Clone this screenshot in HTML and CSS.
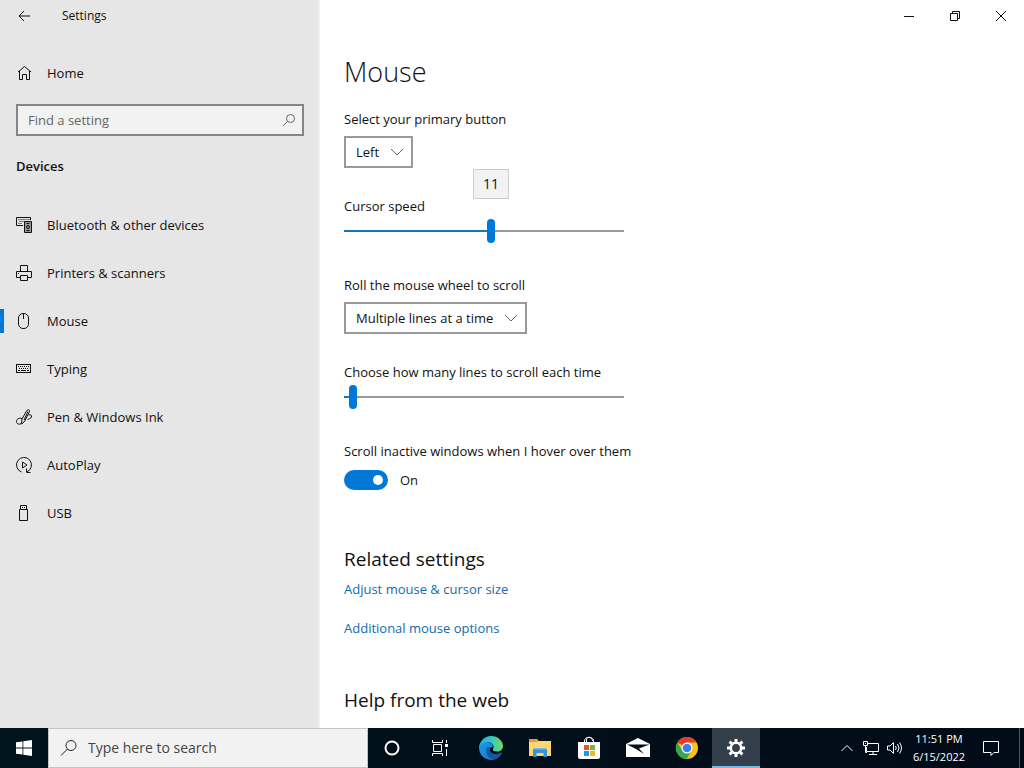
FILE: index.html
```html
<!DOCTYPE html>
<html lang="en">
<head>
    <meta charset="UTF-8">
    <meta name="viewport" content="width=device-width, initial-scale=1.0">
    <title>Settings</title>
    <link rel="stylesheet" href="styles.css">
</head>
<body>
    <div class="window">
        <!-- Sidebar -->
        <aside class="sidebar">
            <div class="title-bar">
                <button class="back-btn" aria-label="Back">
                    <svg width="12" height="12" viewBox="0 0 12 12"><path d="M12 6H1M6 1L1 6l5 5"/></svg>
                </button>
                <span>Settings</span>
            </div>

            <a class="nav-item home" href="#">
                <svg width="16" height="16" viewBox="0 0 16 16"><path d="M2 7L8.500 1.500L15 7M3.500 6v8.500h3v-5h4v5h3V6"/></svg>
                Home
            </a>

            <div class="search-box">
                <input type="text" placeholder="Find a setting" aria-label="Find a setting">
                <svg width="14" height="14" viewBox="0 0 14 14"><circle cx="8.500" cy="5.500" r="4"/><path d="M5.500 8.500L1 13"/></svg>
            </div>

            <h2 class="sidebar-title">Devices</h2>

            <nav class="nav">
                <a class="nav-item" href="#">
                    <svg width="16" height="16" viewBox="0 0 16 16"><path d="M7 8.500H.5v-8h14V3"/><path d="M2.500 2.500h11M3.500 4.500h5M2.500 6.500h4" stroke-dasharray="1 1"/><path class="dark-fill" d="M8.500 4.500h7v11h-7z"/><path d="M10.500 6.500h3M10.500 13.500h3"/><circle cx="12" cy="10" r="1.500"/></svg>
                    Bluetooth &amp; other devices
                </a>
                <a class="nav-item" href="#">
                    <svg width="16" height="16" viewBox="0 0 16 16"><path d="M4.500 6V.5h7V6M4 12.500H.5v-6h15v6H12M4.500 10.500h7v5h-7zM2 8.500h1"/></svg>
                    Printers &amp; scanners
                </a>
                <a class="nav-item active" href="#">
                    <svg width="16" height="16" viewBox="0 0 16 16"><rect x="2.500" y=".5" width="10" height="15" rx="4.500"/><path d="M7.500 1v5"/></svg>
                    Mouse
                </a>
                <a class="nav-item" href="#">
                    <svg width="16" height="16" viewBox="0 0 16 16"><rect x=".5" y="3.500" width="14" height="8"/><path d="M2 5.500h11M3 7.500h10" stroke-dasharray="1 1"/><path d="M2 9.500h2M5 9.500h5M11 9.500h2"/></svg>
                    Typing
                </a>
                <a class="nav-item" href="#">
                    <svg width="16" height="16" viewBox="0 0 16 16"><path d="M6 10L10.500 2C11.500.2 14 .6 13.500 2.500L8.500 12.500L5.500 15L6 10zM8 11L12 2.500M6 9.500C3 8.500.5 10 .5 12.500c0 3 4 3.500 5 1.500M12.500 6c2-1 3.500.5 3 2s-3 2-4 2.500"/></svg>
                    Pen &amp; Windows Ink
                </a>
                <a class="nav-item" href="#">
                    <svg width="16" height="16" viewBox="0 0 16 16"><path d="M5.500 15A7.500 7.500 0 1 1 11 14.800M14.500 15.500h-4v-4M6.500 5l4.500 3-4.500 3z"/></svg>
                    AutoPlay
                </a>
                <a class="nav-item" href="#">
                    <svg width="16" height="16" viewBox="0 0 16 16"><path d="M4.500 4V.5h6V4M3.500 4.500h8v11h-8zM6 2.500h1M8 2.500h1"/></svg>
                    USB
                </a>
            </nav>
        </aside>

        <!-- Main content -->
        <main class="content">
            <div class="window-controls">
                <button aria-label="Minimize"><svg width="12" height="12" viewBox="0 0 12 12"><path d="M1 6.500h10"/></svg></button>
                <button aria-label="Restore"><svg width="12" height="12" viewBox="0 0 12 12"><path d="M1.500 3.500h7v7h-7zM3.500 3V1.500h7v7H9"/></svg></button>
                <button aria-label="Close"><svg width="12" height="12" viewBox="0 0 12 12"><path d="M1 1l10 10M11 1L1 11"/></svg></button>
            </div>

            <h1>Mouse</h1>

            <div class="field">
                <label for="primary-button">Select your primary button</label>
                <div class="select-box">
                    <select id="primary-button">
                        <option>Left</option>
                        <option>Right</option>
                    </select>
                    <svg width="12" height="8" viewBox="0 0 12 8"><path d="M0 1l6 6 6-6"/></svg>
                </div>
            </div>

            <div class="field slider-field">
                <label for="cursor-speed">Cursor speed</label>
                <div class="slider" style="--fill: 52.5%">
                    <input type="range" id="cursor-speed" min="1" max="20" value="11">
                    <output class="tooltip" for="cursor-speed">11</output>
                </div>
            </div>

            <div class="field">
                <label for="wheel-scroll">Roll the mouse wheel to scroll</label>
                <div class="select-box">
                    <select id="wheel-scroll">
                        <option>Multiple lines at a time</option>
                        <option>One screen at a time</option>
                    </select>
                    <svg width="12" height="8" viewBox="0 0 12 8"><path d="M0 1l6 6 6-6"/></svg>
                </div>
            </div>

            <div class="field slider-field">
                <label for="scroll-lines">Choose how many lines to scroll each time</label>
                <div class="slider" style="--fill: 3%">
                    <input type="range" id="scroll-lines" min="1" max="100" value="3">
                </div>
            </div>

            <div class="field toggle-field">
                <label for="scroll-inactive">Scroll inactive windows when I hover over them</label>
                <div class="toggle-row">
                    <input type="checkbox" role="switch" class="toggle" id="scroll-inactive" checked>
                    <span>On</span>
                </div>
            </div>

            <section class="links">
                <h2>Related settings</h2>
                <a href="#">Adjust mouse &amp; cursor size</a>
                <a href="#">Additional mouse options</a>
            </section>

            <section class="links">
                <h2>Help from the web</h2>
            </section>
        </main>
    </div>

    <!-- Taskbar -->
    <footer class="taskbar">
        <button class="task-btn" aria-label="Start">
            <svg width="16" height="16" viewBox="0 0 16 16"><path fill="#fff" d="M0 2.300L6.500 1.400V7.600H0zM7.300 1.300L16 0v7.600H7.300zM0 8.400h6.500v6.200L0 13.700zM7.300 8.400H16V16l-8.700-1.300z"/></svg>
        </button>
        <div class="task-search">
            <svg width="18" height="18" viewBox="0 0 18 18"><circle cx="11" cy="6.500" r="5"/><path d="M7.500 10L1 16.500"/></svg>
            <input type="text" placeholder="Type here to search" aria-label="Type here to search">
        </div>
        <button class="task-btn" aria-label="Cortana">
            <svg width="16" height="16" viewBox="0 0 16 16"><circle cx="8" cy="8" r="6.500" fill="none" stroke="#fff" stroke-width="2"/></svg>
        </button>
        <button class="task-btn" aria-label="Task View">
            <svg width="16" height="16" viewBox="0 0 16 16"><path fill="none" stroke="#fff" d="M.5 0v2.500h10V0M.5 16v-2.500h10V16M1.500 4.500h8v7h-8zM14.500 0v3M14.500 9v7"/><path fill="#fff" d="M13 4h3v3h-3z"/></svg>
        </button>
        <div class="pinned">
            <button class="task-btn" aria-label="Microsoft Edge">
                <svg width="24" height="24" viewBox="0 0 24 24">
                    <defs>
                        <linearGradient id="edge-top" x1="0" y1="0" x2="1" y2="0"><stop offset="0" stop-color="#2aa9e0"/><stop offset=".5" stop-color="#36c6c3"/><stop offset="1" stop-color="#73dc58"/></linearGradient>
                        <linearGradient id="edge-low" x1="0" y1="0" x2="1" y2="1"><stop offset="0" stop-color="#1b9be6"/><stop offset="1" stop-color="#1672cc"/></linearGradient>
                    </defs>
                    <path fill="url(#edge-low)" d="M0 12C0 7 4 5 8 6c4 .5 6 3 6 5-4-1-5 6 1 7 3 .6 5.500-.4 7-1.200.6-.3 1 .1.600.8A12 12 0 0 1 0 12z"/>
                    <path fill="#1656a0" d="M8.500 11c-3 4-.5 11 5.500 12.500 3.500-.5 7-2.700 8.600-5.900.4-.7 0-1.100-.6-.8-6 3.500-13 .2-11.200-5.400z"/>
                    <path fill="url(#edge-top)" d="M0 12C.5 5 5.500 0 12 0c7 0 12 5 12 10 0 3.500-2.500 5.500-6 5.500-3 0-4.500-1-4-2 2-3.500-1-7.500-6-7.500-4 0-7 2.500-8 6z"/>
                </svg>
            </button>
            <button class="task-btn" aria-label="File Explorer">
                <svg width="22" height="18" viewBox="0 0 22 18"><path fill="#e7a12b" d="M0 0h8l2 2h12v4H0z"/><path fill="#fcd66f" d="M0 3h8l2-1h12v15H0z"/><path fill="#3c91d4" d="M4 10.500l1.500-1.500h11l1.500 1.500V18h-3.500v-4h-7v4H4z"/><path fill="#74b9e8" d="M5.500 9h11l1 1.500h-13z"/></svg>
            </button>
            <button class="task-btn" aria-label="Microsoft Store">
                <svg width="24" height="24" viewBox="0 0 24 24"><path fill="none" stroke="#fff" d="M7.500 7V5c0-5 9-5 9 0v2M9.500 7V4c0-4 6-3 6 1"/><path fill="#fff" d="M1 6h22v15q0 2-2 2H3q-2 0-2-2z"/><path fill="#e75431" d="M7 9h5v5H7z"/><path fill="#77b62d" d="M13 9h5v5h-5z"/><path fill="#1c9ee6" d="M7 15h5v5H7z"/><path fill="#f5b823" d="M13 15h5v5h-5z"/></svg>
            </button>
            <button class="task-btn" aria-label="Mail">
                <svg width="24" height="20" viewBox="0 0 24 20"><path fill="#fff" d="M0 6l12-6 12 6v13H0z"/><path fill="#03111b" d="M1 6.500h22.500L13 10.500l5 5.500-8-5z"/></svg>
            </button>
            <button class="task-btn" aria-label="Google Chrome">
                <svg width="24" height="24" viewBox="0 0 24 24"><circle cx="12" cy="12" r="11" fill="#fbc116"/><path fill="#e33b2e" d="M12 12L2.500 6.500A11 11 0 0 1 21.500 6.500H12z"/><path fill="#2da94f" d="M2.500 6.500A11 11 0 0 0 11.500 23L16.500 14.500 12 12 7.500 15z"/><circle cx="12" cy="12" r="5.500" fill="#fff"/><circle cx="12" cy="12" r="4.300" fill="#3b7ded"/></svg>
            </button>
            <button class="task-btn active" aria-label="Settings">
                <svg width="18" height="18" viewBox="0 0 18 18"><circle cx="9" cy="9" r="5.200" fill="none" stroke="#fff" stroke-width="2.600"/><path stroke="#fff" stroke-width="3" d="M9 0v3M9 15v3M0 9h3M15 9h3M2.600 2.600l2.200 2.200M13.200 13.200l2.200 2.200M15.400 2.600l-2.200 2.200M4.800 13.200l-2.200 2.200"/></svg>
            </button>
        </div>

        <div class="tray">
            <button aria-label="Show hidden icons"><svg width="12" height="8" viewBox="0 0 12 8"><path d="M.5 7L6 1.500 11.500 7"/></svg></button>
            <button aria-label="Network"><svg width="18" height="16" viewBox="0 0 18 16"><path d="M6 3.500h10.500v8H4.500V7M7 14.500h8M11 12v2M1.500 1.500h4v4h-4zM3.500 6v6.500H5M3 3.500h1"/></svg></button>
            <button aria-label="Volume"><svg width="18" height="16" viewBox="0 0 18 16"><path d="M1.500 6H4l3.500-3.500v11L4 10H1.500zM9.500 6q1.500 2 0 4M11.500 4q3 4 0 8M13.500 2.500q4 5.500 0 11"/></svg></button>
            <div class="clock">
                <span>11:51 PM</span>
                <span>6/15/2022</span>
            </div>
            <button class="notify" aria-label="Notifications"><svg width="18" height="18" viewBox="0 0 18 18"><path d="M1.500 2.500h15v11H12l-3 3v-3H1.500z"/></svg></button>
            <button class="show-desktop" aria-label="Show desktop"></button>
        </div>
    </footer>
</body>
</html>
```
FILE: styles.css
```css
/* General Styling */
* {
    box-sizing: border-box;
}

body {
    display: flex;
    flex-direction: column;
    min-height: 100vh;
    margin: 0;
    background-color: #fff;
    color: #111;
    font-family: "Open Sans", "Noto Sans", sans-serif;
    font-size: 13px;
    line-height: 20px;
}

h1, h2 {
    margin: 0;
    font-weight: normal;
}

button {
    display: flex;
    align-items: center;
    justify-content: center;
    padding: 0;
    border: none;
    background: none;
    color: inherit;
}

input, select {
    margin: 0;
    font: inherit;
    color: inherit;
}

svg {
    flex-shrink: 0;
}

.window {
    display: flex;
    flex: 1;
}

.window svg {
    fill: none;
    stroke: #111;
}

/* Sidebar */
.sidebar {
    flex: 0 0 320px;
    background-color: #e6e6e6;
    border-right: 2px solid #f0f0f0;
}

.title-bar {
    display: flex;
    align-items: center;
    gap: 14px;
    height: 32px;
    font-size: 12px;
}

.back-btn {
    width: 48px;
    height: 32px;
}

.nav-item {
    display: flex;
    align-items: center;
    gap: 15px;
    height: 48px;
    padding-left: 16px;
    color: inherit;
    text-decoration: none;
}

.nav-item.active {
    background: linear-gradient(#0078d7, #0078d7) left center / 4px 24px no-repeat;
}

.nav-item .dark-fill {
    fill: #999;
}

.home {
    margin-top: 17px;
}

.search-box {
    display: flex;
    align-items: center;
    height: 32px;
    margin: 7px 14px 0 16px;
    padding: 0 6px 0 10px;
    border: 2px solid #858585;
    background-color: #f2f2f2;
}

.search-box input {
    flex: 1;
    min-width: 0;
    padding: 0;
    border: none;
    background: none;
}

.search-box input::placeholder {
    color: #666;
}

.search-box svg {
    stroke: #666;
}

.sidebar-title {
    margin: 20px 16px 25px;
    font-size: 13px;
    font-weight: 600;
}

/* Main content */
.content {
    flex: 1;
    padding: 0 0 14px 24px;
}

.window-controls {
    display: flex;
    justify-content: flex-end;
    height: 32px;
}

.window-controls button {
    width: 46px;
}

.content h1 {
    margin: 22px 0 19px;
    font-size: 27px;
    font-weight: 300;
    line-height: 36px;
}

.field {
    display: flex;
    flex-direction: column;
    align-items: flex-start;
    gap: 7px;
    margin-bottom: 28px;
}

.slider-field {
    gap: 3px;
    margin-bottom: 32px;
}

.toggle-field {
    margin-bottom: 53px;
}

.select-box {
    position: relative;
}

.select-box select {
    display: block;
    appearance: none;
    field-sizing: content;
    height: 32px;
    padding: 0 32px 0 10px;
    border: 2px solid #999;
    border-radius: 0;
    background-color: #fff;
}

.select-box svg {
    position: absolute;
    top: 12px;
    right: 10px;
    stroke: #666;
    pointer-events: none;
}

.slider {
    position: relative;
    width: 280px;
    max-width: 100%;
}

.slider input {
    display: block;
    appearance: none;
    width: 100%;
    height: 24px;
    background: linear-gradient(to right, #0f78bf var(--fill), #999 var(--fill)) center / 100% 2px no-repeat;
}

.slider input::-webkit-slider-thumb {
    appearance: none;
    width: 8px;
    height: 24px;
    border-radius: 4px;
    background-color: #0078d7;
}

.tooltip {
    position: absolute;
    bottom: 44px;
    left: var(--fill);
    width: 36px;
    transform: translateX(-50%);
    border: 1px solid #ccc;
    background-color: #f2f2f2;
    font-size: 14px;
    line-height: 28px;
    text-align: center;
}

.toggle-row {
    display: flex;
    align-items: center;
    gap: 12px;
    height: 24px;
}

.toggle {
    display: flex;
    align-items: center;
    justify-content: flex-end;
    appearance: none;
    width: 44px;
    height: 20px;
    padding: 0 5px;
    border-radius: 10px;
    background-color: #0078d7;
}

.toggle::before {
    content: "";
    width: 10px;
    height: 10px;
    border-radius: 50%;
    background-color: #fff;
}

.links {
    display: flex;
    flex-direction: column;
    align-items: flex-start;
    margin-top: 48px;
}

.links h2 {
    font-size: 19px;
    line-height: 28px;
}

.links a {
    margin-top: 6px;
    color: #0f6cb0;
    text-decoration: none;
}

.links a + a {
    margin-top: 19px;
}

/* Taskbar */
.taskbar {
    display: flex;
    height: 40px;
    background: linear-gradient(to right, #00141d, #020b18);
    color: #fff;
}

.task-btn {
    width: 48px;
    height: 40px;
}

.task-btn.active {
    background-color: #33404b;
    box-shadow: inset 0 -2px #76b9ed;
}

.task-search {
    display: flex;
    align-items: center;
    gap: 10px;
    width: 320px;
    padding: 0 11px;
    border: 1px solid #c4c4c4;
    background-color: #f2f2f2;
    color: #333;
}

.task-search svg {
    fill: none;
    stroke: #222;
}

.task-search input {
    flex: 1;
    min-width: 0;
    padding: 0;
    border: none;
    background: none;
    font-size: 14px;
}

.task-search input::placeholder {
    color: #444;
}

.pinned {
    display: flex;
    gap: 1px;
    padding-left: 3px;
}

.tray {
    display: flex;
    margin-left: auto;
}

.tray svg {
    fill: none;
    stroke: #fff;
}

.tray button {
    width: 24px;
}

.clock {
    display: flex;
    flex-direction: column;
    align-items: center;
    justify-content: center;
    width: 56px;
    margin-left: 4px;
    font-size: 11px;
    line-height: 18px;
}

.tray .notify {
    width: 48px;
}

.tray .show-desktop {
    width: 5px;
    margin-left: 4px;
    border-left: 1px solid #4a5560;
}
```
